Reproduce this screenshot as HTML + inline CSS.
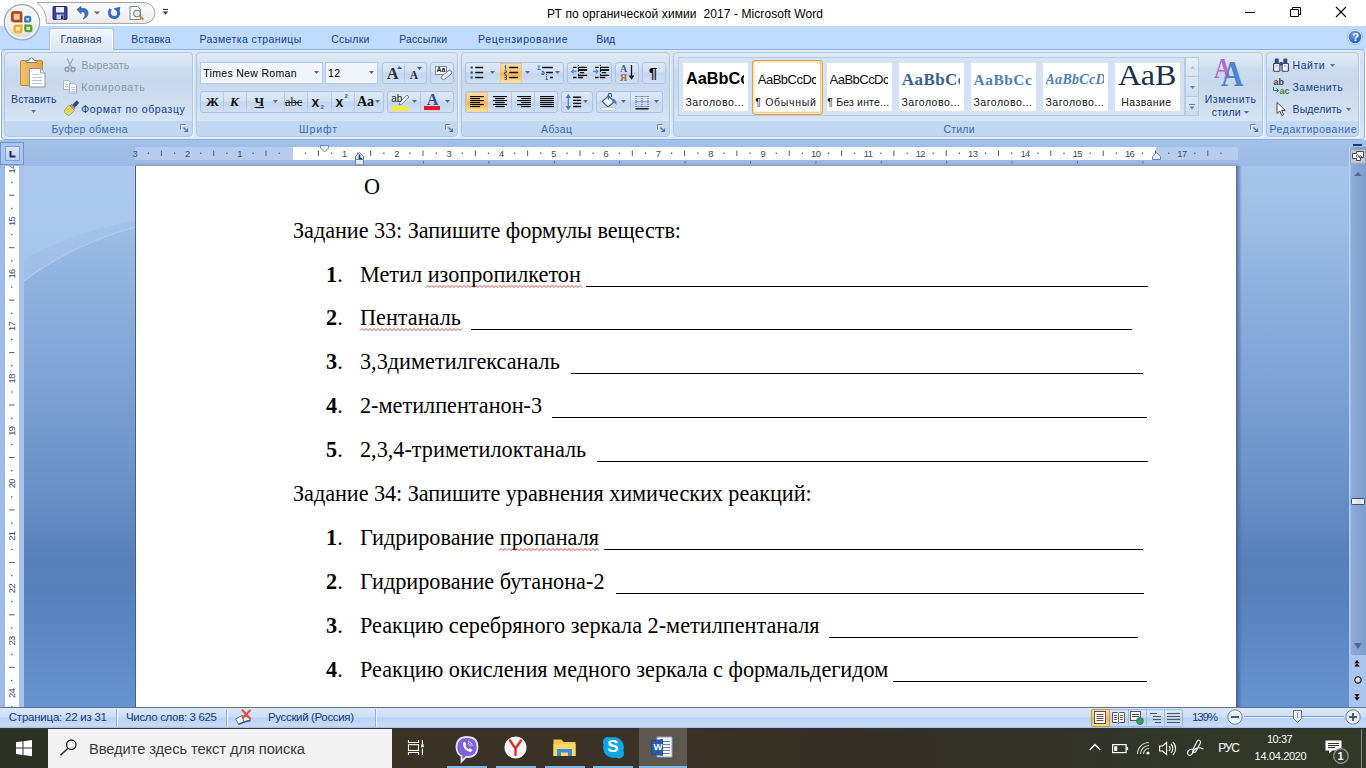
<!DOCTYPE html>
<html lang="ru"><head><meta charset="utf-8"><title>РТ по органической химии 2017 - Microsoft Word</title>
<style>
*{box-sizing:border-box;margin:0;padding:0}
html,body{width:1366px;height:768px;overflow:hidden;background:#fff}
body{font-family:"Liberation Sans","DejaVu Sans",sans-serif;font-size:11px;color:#15428b;position:relative}
.a,.tx,svg.i{position:absolute}
.tx{white-space:nowrap;z-index:3}
svg.i{overflow:visible}
#tabs{left:0;top:26px;width:1366px;height:24px;background:#bfdbff}
#atab{left:49px;top:27.5px;width:65px;height:22.5px;z-index:2;border:1px solid #a9c5ea;border-bottom:none;border-radius:4px 4px 0 0;background:linear-gradient(#f2f7fd 0,#e4edf9 50%,#dde8f6 100%);box-shadow:inset 1px 1px 0 rgba(255,255,255,.8),inset -1px 0 0 rgba(255,255,255,.8)}
#ribbon{left:1px;top:49px;width:1364px;height:91px;border:1px solid #93b4e0;border-bottom-color:#8eafd9;border-radius:4px;background:linear-gradient(#dde8f7 0,#d2e1f4 14px,#cfe0f5 60px,#d6e8f9 100%)}
.grp{top:52px;height:85px;border:1px solid #afc6e5;border-radius:4px;box-shadow:1px 1px 0 rgba(255,255,255,.55);background:linear-gradient(#dfe9f6 0,#d6e3f3 11px,#cbdbef 16px,#c7d8ed 30px,#cfdff2 55px,#d6e5f6 68px,#c2d8f1 68.5px,#c0d7f0 100%)}
.bg{border:1px solid #abc3e3;border-radius:3px;background:linear-gradient(#dbe7f6 0,#d3e1f4 45%,#c3d6ee 50%,#cfdff4 100%);height:22px}
.on{background:linear-gradient(#fbdcae 0,#fac880 40%,#f8b352 55%,#fbd078 85%,#fde5a8 100%);border:1px solid #eec083;border-top-color:#e3c29a;border-bottom-color:#f3d9a0}
.sep{width:1px;background:#a9c0df;top:0;bottom:0}
.box{background:#f1f6fd;border:1px solid #b4c9e6;height:22px}
#docarea{left:0;top:140px;width:1366px;height:567px;background:linear-gradient(#a3c0e8 0,#a6c3eb 30px,#9dbce6 90px,#8baedd 160px,#7a9fd2 260px,#6790c6 350px,#5781ba 420px,#5682bc 450px,#5d8ac6 510px,#6593d0 567px)}
#page{left:136px;top:166px;width:1100px;height:541px;background:#fff}
#status{left:0;top:707px;width:1366px;height:21px;background:linear-gradient(#dbe8f9 0,#cbdef8 9px,#b7d2f5 10px,#c9dcf6 18px,#9fbce4 100%);border-top:1px solid #61728f}
#taskbar{left:0;top:728px;width:1366px;height:40px;background:linear-gradient(#2e3238 0,#2e3238 1px,rgba(0,0,0,0) 2px),linear-gradient(90deg,#2b3223 0,#2b3223 48px,#3b3226 392px,#3a3226 700px,#352f25 840px,#33332a 1050px,#323828 1250px,#323828 100%)}
.doc{font-family:"Liberation Serif","DejaVu Serif",serif;color:#000;font-size:22.24px;white-space:nowrap;position:absolute;line-height:26px}
.ul{position:absolute;height:1px;background:#000}
.sty{top:63px;width:65px;height:48px;background:#fff;overflow:hidden}
</style></head><body>

<span class="tx" style="left:547.00px;top:7.20px;font:normal normal 12px/14px 'Liberation Sans','DejaVu Sans',sans-serif;color:#000;letter-spacing:0.088px;white-space:pre;">РТ по органической химии  2017 - Microsoft Word</span>
<svg class="i" style="left:1240px;top:0" width="126" height="26" viewBox="0 0 126 26">
<path d="M5,12.5h10" stroke="#000" stroke-width="1" fill="none"/>
<path d="M50.5,9.5h8v7h-8z M52.5,9.5v-2h8v7h-2" stroke="#000" stroke-width="1" fill="none"/>
<path d="M96,7l10,10M106,7l-10,10" stroke="#000" stroke-width="1.1" fill="none"/>
</svg>
<div id="tabs" class="a"></div><div id="atab" class="a"></div>
<svg class="i" style="left:0;top:0" width="180" height="50" viewBox="0 0 180 50">
<defs>
<radialGradient id="ob" cx="0.5" cy="0.35" r="0.75"><stop offset="0" stop-color="#ffffff"/><stop offset="0.55" stop-color="#eef0f3"/><stop offset="0.8" stop-color="#cfd4dc"/><stop offset="1" stop-color="#a9b0bd"/></radialGradient>
<linearGradient id="qp" x1="0" y1="0" x2="0" y2="1"><stop offset="0" stop-color="#fbfbfc"/><stop offset="1" stop-color="#ececee"/></linearGradient>
</defs>
<path d="M37,2.600 A24.600,24.600 0 0 1 46.400,23.400 H144.500 A10.400,10.400 0 0 0 144.500,2.600 Z" fill="url(#qp)" stroke="#9fa3aa" stroke-width="1"/>
<circle cx="22" cy="22.300" r="17.700" fill="url(#ob)" stroke="#9ea5b3" stroke-width="1.200"/>
<circle cx="22" cy="22.300" r="15.800" fill="none" stroke="#fff" stroke-opacity=".75" stroke-width="1.500"/>
<g>
<rect x="12.300" y="12.300" width="8.800" height="8.800" rx="1.800" fill="#f0c9a8" stroke="#b4491d" stroke-width="2.800"/>
<rect x="25.200" y="16.800" width="5" height="4.700" rx="1.200" fill="#cfe0f2" stroke="#3b78b8" stroke-width="2.200"/>
<rect x="14.700" y="25.700" width="6.600" height="6.400" rx="1.500" fill="#fbe6b0" stroke="#efae2c" stroke-width="2.600"/>
<rect x="25.300" y="25.600" width="6" height="5.500" rx="1.300" fill="#dcebc6" stroke="#5a9a32" stroke-width="2.300"/>
<circle cx="21.600" cy="21.600" r="1.100" fill="#9a4a2a"/><circle cx="25.300" cy="21.600" r="1" fill="#2f6aa8"/><circle cx="21.800" cy="25.200" r="1" fill="#e0a030"/><circle cx="25.300" cy="25.200" r="1" fill="#4f8f30"/>
</g>
<!-- save -->
<g><rect x="53" y="6.5" width="14" height="13" rx="1" fill="#3b3f9a" stroke="#23266b" stroke-width="1"/><rect x="56" y="7" width="8" height="5.5" fill="#e9ecf8"/><rect x="56.5" y="14.5" width="7" height="5" fill="#c9cde6"/><rect x="61" y="15.5" width="2" height="3.5" fill="#23266b"/></g>
<!-- undo -->
<path d="M77,9.5 l4,-3 v2 h2.5 a4.5,4.5 0 0 1 4.5,4.5 c0,3 -2,5 -5,6 c1.8,-1.8 2.3,-3.3 2,-5 c-0.3,-1.6 -1.4,-2.3 -2.5,-2.3 h-1.500 v2 z" fill="#3e72c2" stroke="#27509a" stroke-width=".7"/>
<path d="M94,11.5h6l-3,3z" fill="#5d6b85"/>
<!-- redo -->
<path d="M110.400,8.800 C108.300,12.800 109.600,17.400 114.200,17.500 C118.600,17.400 119.600,13.400 117.800,10.300" fill="none" stroke="#3a6cc0" stroke-width="2.900"/><path d="M113.300,8.600 L120.300,6.800 L119.200,13.300z" fill="#3a6cc0"/>
<!-- preview -->
<path d="M130,6.500h7.500l3,3v10h-10.500z" fill="#fff" stroke="#7f8794" stroke-width="1"/><circle cx="137" cy="13.500" r="3.300" fill="#e8f0fa" stroke="#767c86" stroke-width="1.100"/><path d="M139.500,16l4,3.500" stroke="#c98738" stroke-width="2"/>
<path d="M163,9.500h5" stroke="#2c3a58" stroke-width="1.200"/><path d="M162.800,11.500h5.400l-2.700,3.300z" fill="#2c3a58"/>
</svg>
<span class="tx" style="left:60.50px;top:32.17px;font:normal normal 10.5px/14px 'Liberation Sans','DejaVu Sans',sans-serif;color:#1e3a6b;letter-spacing:0.173px;">Главная</span>
<span class="tx" style="left:131.30px;top:32.17px;font:normal normal 10.5px/14px 'Liberation Sans','DejaVu Sans',sans-serif;color:#173f83;letter-spacing:0.029px;">Вставка</span>
<span class="tx" style="left:199.50px;top:32.17px;font:normal normal 10.5px/14px 'Liberation Sans','DejaVu Sans',sans-serif;color:#173f83;letter-spacing:0.409px;">Разметка страницы</span>
<span class="tx" style="left:331.30px;top:32.17px;font:normal normal 10.5px/14px 'Liberation Sans','DejaVu Sans',sans-serif;color:#173f83;letter-spacing:0.207px;">Ссылки</span>
<span class="tx" style="left:399.30px;top:32.17px;font:normal normal 10.5px/14px 'Liberation Sans','DejaVu Sans',sans-serif;color:#173f83;letter-spacing:0.096px;">Рассылки</span>
<span class="tx" style="left:478.00px;top:32.17px;font:normal normal 10.5px/14px 'Liberation Sans','DejaVu Sans',sans-serif;color:#173f83;letter-spacing:0.648px;">Рецензирование</span>
<span class="tx" style="left:596.30px;top:32.17px;font:normal normal 10.5px/14px 'Liberation Sans','DejaVu Sans',sans-serif;color:#173f83;letter-spacing:-0.098px;">Вид</span>
<svg class="i" style="left:1347px;top:29px" width="16" height="16" viewBox="0 0 16 16"><defs><radialGradient id="hg" cx=".4" cy=".3" r=".8"><stop offset="0" stop-color="#6fa2e8"/><stop offset="1" stop-color="#1c4fa6"/></radialGradient></defs><circle cx="8" cy="8" r="7" fill="url(#hg)" stroke="#e8f1fd" stroke-width="1.300"/><circle cx="8" cy="8" r="7.600" fill="none" stroke="#7a9fd6" stroke-width=".6"/></svg>
<span class="tx" style="left:1352.30px;top:30.05px;font:normal bold 11px/14px 'Liberation Sans','DejaVu Sans',sans-serif;color:#fff;letter-spacing:0.000px;">?</span>
<div id="ribbon" class="a"></div>
<div class="a grp" style="left:4px;width:189px"></div>
<span class="tx" style="left:51.50px;top:122.07px;font:normal normal 10.5px/14px 'Liberation Sans','DejaVu Sans',sans-serif;color:#3e6aaa;letter-spacing:0.423px;">Буфер обмена</span>
<svg class="i" style="left:180px;top:124px" width="9" height="9" viewBox="0 0 9 9"><path d="M0.500,5.500v-5h5" fill="none" stroke="#6b7f9e" stroke-width="1"/><path d="M1.500,6.500v-5h5" fill="none" stroke="#fff" stroke-width="1" opacity=".8"/><path d="M3.500,3.500l4,4M7.500,4.500v3h-3" fill="none" stroke="#5a6f90" stroke-width="1.100"/></svg>
<div class="a grp" style="left:196px;width:262px"></div>
<span class="tx" style="left:299.00px;top:122.07px;font:normal normal 10.5px/14px 'Liberation Sans','DejaVu Sans',sans-serif;color:#3e6aaa;letter-spacing:0.864px;">Шрифт</span>
<svg class="i" style="left:445px;top:124px" width="9" height="9" viewBox="0 0 9 9"><path d="M0.500,5.500v-5h5" fill="none" stroke="#6b7f9e" stroke-width="1"/><path d="M1.500,6.500v-5h5" fill="none" stroke="#fff" stroke-width="1" opacity=".8"/><path d="M3.500,3.500l4,4M7.500,4.500v3h-3" fill="none" stroke="#5a6f90" stroke-width="1.100"/></svg>
<div class="a grp" style="left:461px;width:209px"></div>
<span class="tx" style="left:541.00px;top:122.07px;font:normal normal 10.5px/14px 'Liberation Sans','DejaVu Sans',sans-serif;color:#3e6aaa;letter-spacing:0.386px;">Абзац</span>
<svg class="i" style="left:657px;top:124px" width="9" height="9" viewBox="0 0 9 9"><path d="M0.500,5.500v-5h5" fill="none" stroke="#6b7f9e" stroke-width="1"/><path d="M1.500,6.500v-5h5" fill="none" stroke="#fff" stroke-width="1" opacity=".8"/><path d="M3.500,3.500l4,4M7.500,4.500v3h-3" fill="none" stroke="#5a6f90" stroke-width="1.100"/></svg>
<div class="a grp" style="left:673px;width:590px"></div>
<span class="tx" style="left:943.50px;top:122.07px;font:normal normal 10.5px/14px 'Liberation Sans','DejaVu Sans',sans-serif;color:#3e6aaa;letter-spacing:0.188px;">Стили</span>
<svg class="i" style="left:1250px;top:124px" width="9" height="9" viewBox="0 0 9 9"><path d="M0.500,5.500v-5h5" fill="none" stroke="#6b7f9e" stroke-width="1"/><path d="M1.500,6.500v-5h5" fill="none" stroke="#fff" stroke-width="1" opacity=".8"/><path d="M3.500,3.500l4,4M7.500,4.500v3h-3" fill="none" stroke="#5a6f90" stroke-width="1.100"/></svg>
<div class="a grp" style="left:1266px;width:93px"></div>
<span class="tx" style="left:1269.50px;top:122.07px;font:normal normal 10.5px/14px 'Liberation Sans','DejaVu Sans',sans-serif;color:#3e6aaa;letter-spacing:0.540px;">Редактирование</span>
<svg class="i" style="left:19px;top:57px" width="30" height="32" viewBox="0 0 30 32">
<defs><linearGradient id="pg" x1="0" y1="0" x2="1" y2="0"><stop offset="0" stop-color="#f2c06a"/><stop offset="1" stop-color="#e2a445"/></linearGradient></defs>
<rect x="1.500" y="3.500" width="22" height="25" rx="1.500" fill="url(#pg)" stroke="#c08a3a" stroke-width="1"/>
<path d="M7,5.500 v-2 h3 a2.500,2.500 0 0 1 5,0 h3 v2z" fill="#f4f4f4" stroke="#7d7d7d" stroke-width=".9"/>
<path d="M10.500,11.500 h11 l4.500,4.500 v14 h-15.500z" fill="#fff" stroke="#8a93a3" stroke-width="1"/>
<path d="M21.500,11.500 v4.500 h4.500" fill="#e6ebf3" stroke="#8a93a3" stroke-width=".9"/>
<path d="M13,17.500h7M13,20.500h10M13,23.500h10M13,26.500h10" stroke="#b9c3d2" stroke-width="1"/>
</svg>
<span class="tx" style="left:11.00px;top:92.17px;font:normal normal 10.5px/14px 'Liberation Sans','DejaVu Sans',sans-serif;color:#173f83;letter-spacing:0.142px;">Вставить</span>
<svg class="i" style="left:31.0px;top:110.0px" width="5" height="3" viewBox="0 0 5 3"><path d="M0,0h5l-2.500,3z" fill="#5b6f94"/></svg>
<svg class="i" style="left:64px;top:58px" width="12" height="15" viewBox="0 0 12 15"><path d="M3,0.500 L7.500,9.500 M9,0.500 L4.500,9.500" stroke="#9aa7bd" stroke-width="1.300" fill="none"/><circle cx="3" cy="11.500" r="2" fill="none" stroke="#8796b2" stroke-width="1.300"/><circle cx="9" cy="11.500" r="2" fill="none" stroke="#8796b2" stroke-width="1.300"/></svg>
<span class="tx" style="left:81.60px;top:58.17px;font:normal normal 10.5px/14px 'Liberation Sans','DejaVu Sans',sans-serif;color:#8c97ab;letter-spacing:0.143px;">Вырезать</span>
<svg class="i" style="left:62px;top:80px" width="16" height="14" viewBox="0 0 16 14"><path d="M1.500,0.500h5l2,2v7h-7z" fill="#f1f4f8" stroke="#a9b4c6" stroke-width="1"/><path d="M7.500,3.500h5l2,2v7.500h-7z" fill="#f7f9fb" stroke="#a0acbf" stroke-width="1"/><path d="M9,7.500h4M9,9.500h4M9,11.500h4M3,4.500h3M3,6.500h3" stroke="#c3ccd9" stroke-width="1"/></svg>
<span class="tx" style="left:81.30px;top:80.28px;font:normal normal 10.5px/14px 'Liberation Sans','DejaVu Sans',sans-serif;color:#8c97ab;letter-spacing:0.774px;">Копировать</span>
<svg class="i" style="left:62px;top:101px" width="17" height="17" viewBox="0 0 17 17"><g transform="translate(8.800,7.800) rotate(45)"><rect x="-1.500" y="-10" width="3" height="6.500" rx="1" fill="#3d416f" stroke="#2a2d52" stroke-width=".6"/><rect x="-2.700" y="-3.800" width="5.400" height="2.400" fill="#9a9fb8" stroke="#5a5f80" stroke-width=".6"/><path d="M-3.700,-1.400h7.400v5.500c0,2 -1.500,3 -3.700,3s-3.700,-1 -3.700,-3z" fill="#e9d76a" stroke="#a8922e" stroke-width=".8"/><path d="M-1.800,-1v6M0.600,-1v6.500" stroke="#cdb84a" stroke-width=".7"/></g></svg>
<span class="tx" style="left:81.30px;top:102.08px;font:normal normal 10.5px/14px 'Liberation Sans','DejaVu Sans',sans-serif;color:#173f83;letter-spacing:0.584px;">Формат по образцу</span>
<div class="a box" style="left:200px;top:62px;width:123px"></div><div class="a box" style="left:325px;top:62px;width:53px"></div>
<span class="tx" style="left:203.20px;top:66.08px;font:normal normal 10.5px/14px 'Liberation Sans','DejaVu Sans',sans-serif;color:#000;letter-spacing:0.316px;">Times New Roman</span>
<svg class="i" style="left:313.5px;top:71.0px" width="5" height="3" viewBox="0 0 5 3"><path d="M0,0h5l-2.500,3z" fill="#5b6f94"/></svg>
<svg class="i" style="left:369.0px;top:71.0px" width="5" height="3" viewBox="0 0 5 3"><path d="M0,0h5l-2.500,3z" fill="#5b6f94"/></svg>
<span class="tx" style="left:328.00px;top:66.08px;font:normal normal 10.5px/14px 'Liberation Sans','DejaVu Sans',sans-serif;color:#000;letter-spacing:0.321px;">12</span>
<div class="a bg" style="left:382px;top:62px;width:45px"></div>
<div class="a" style="left:404px;top:63px;width:1px;height:20px;background:linear-gradient(#c3d3ea,#a8bedd 50%,#c3d3ea)"></div>
<div class="a bg" style="left:430px;top:62px;width:24px"></div>
<div class="a bg" style="left:200px;top:91px;width:184px"></div>
<div class="a" style="left:223px;top:92px;width:1px;height:20px;background:linear-gradient(#c3d3ea,#a8bedd 50%,#c3d3ea)"></div>
<div class="a" style="left:246px;top:92px;width:1px;height:20px;background:linear-gradient(#c3d3ea,#a8bedd 50%,#c3d3ea)"></div>
<div class="a" style="left:284px;top:92px;width:1px;height:20px;background:linear-gradient(#c3d3ea,#a8bedd 50%,#c3d3ea)"></div>
<div class="a" style="left:307px;top:92px;width:1px;height:20px;background:linear-gradient(#c3d3ea,#a8bedd 50%,#c3d3ea)"></div>
<div class="a" style="left:331px;top:92px;width:1px;height:20px;background:linear-gradient(#c3d3ea,#a8bedd 50%,#c3d3ea)"></div>
<div class="a" style="left:354px;top:92px;width:1px;height:20px;background:linear-gradient(#c3d3ea,#a8bedd 50%,#c3d3ea)"></div>
<div class="a bg" style="left:387px;top:91px;width:67px"></div>
<div class="a" style="left:420px;top:92px;width:1px;height:20px;background:linear-gradient(#c3d3ea,#a8bedd 50%,#c3d3ea)"></div>
<span class="tx" style="left:386.70px;top:64.98px;font:normal bold 16.5px/18px 'Liberation Serif','DejaVu Serif',serif;color:#2b2b33;letter-spacing:0.000px;">A</span>
<svg class="i" style="left:396.500px;top:66.200px" width="5" height="3" viewBox="0 0 5 3"><path d="M0,3h5l-2.500,-3z" fill="#3f5f98"/></svg>
<span class="tx" style="left:409.80px;top:68.42px;font:normal bold 11.5px/14px 'Liberation Serif','DejaVu Serif',serif;color:#2b2b33;letter-spacing:0.000px;">A</span>
<svg class="i" style="left:417px;top:66.800px" width="5" height="3" viewBox="0 0 5 3"><path d="M0,0h5l-2.500,3z" fill="#3f5f98"/></svg>
<svg class="i" style="left:434.500px;top:65.500px" width="18" height="17" viewBox="0 0 18 17"><rect x="0.500" y="0.500" width="11" height="8" fill="#fff" stroke="#7b8aa5" stroke-width="1"/><path d="M7,10 l6,-5 a2,2 0 0 1 3,3 l-6,5 a2,2 0 0 1 -3,-3z" fill="#f2f4f8" stroke="#6d7b95" stroke-width="1"/></svg>
<span class="tx" style="left:436.50px;top:66.35px;font:normal bold 7px/8px 'Liberation Sans','DejaVu Sans',sans-serif;color:#222;letter-spacing:0.000px;">Aa</span>
<span class="tx" style="left:206.00px;top:93.55px;font:normal bold 13px/16px 'Liberation Serif','DejaVu Serif',serif;color:#111;letter-spacing:0.000px;">Ж</span>
<span class="tx" style="left:230.00px;top:93.55px;font:italic bold 13px/16px 'Liberation Serif','DejaVu Serif',serif;color:#111;letter-spacing:0.000px;">К</span>
<span class="tx" style="left:254.50px;top:93.55px;font:normal bold 13px/16px 'Liberation Serif','DejaVu Serif',serif;color:#111;letter-spacing:0.000px;text-decoration:underline;">Ч</span>
<svg class="i" style="left:272.8px;top:100.0px" width="5" height="3" viewBox="0 0 5 3"><path d="M0,0h5l-2.500,3z" fill="#5b6f94"/></svg>
<span class="tx" style="left:285.00px;top:94.58px;font:normal normal 12.5px/14px 'Liberation Serif','DejaVu Serif',serif;color:#222;letter-spacing:0.000px;text-decoration:line-through;">abc</span>
<span class="tx" style="left:311.50px;top:93.70px;font:normal bold 14px/16px 'Liberation Sans','DejaVu Sans',sans-serif;color:#111;letter-spacing:0.000px;">x</span>
<span class="tx" style="left:320.50px;top:103.60px;font:normal bold 6px/7px 'Liberation Sans','DejaVu Sans',sans-serif;color:#2f5fae;letter-spacing:0.000px;">2</span>
<span class="tx" style="left:335.50px;top:93.70px;font:normal bold 14px/16px 'Liberation Sans','DejaVu Sans',sans-serif;color:#111;letter-spacing:0.000px;">x</span>
<span class="tx" style="left:344.50px;top:93.10px;font:normal bold 6px/7px 'Liberation Sans','DejaVu Sans',sans-serif;color:#2f5fae;letter-spacing:0.000px;">2</span>
<span class="tx" style="left:357.00px;top:93.70px;font:normal bold 14px/16px 'Liberation Serif','DejaVu Serif',serif;color:#111;letter-spacing:0.000px;">Aa</span>
<svg class="i" style="left:374.8px;top:100.0px" width="5" height="3" viewBox="0 0 5 3"><path d="M0,0h5l-2.500,3z" fill="#5b6f94"/></svg>
<svg class="i" style="left:390px;top:93px" width="22" height="18" viewBox="0 0 22 18"><rect x="1.500" y="13.500" width="17" height="4" fill="#ffee22"/><path d="M10,9 l7,-7 l2,2 l-7,7 l-3,1z" fill="#f5f7fb" stroke="#6a7896" stroke-width=".9"/></svg>
<span class="tx" style="left:391.30px;top:93.70px;font:normal normal 10px/10px 'Liberation Sans','DejaVu Sans',sans-serif;color:#2a2a10;letter-spacing:0.000px;letter-spacing:-0.2px;">ab</span>
<svg class="i" style="left:412.3px;top:100.0px" width="5" height="3" viewBox="0 0 5 3"><path d="M0,0h5l-2.500,3z" fill="#5b6f94"/></svg>
<span class="tx" style="left:426.80px;top:91.60px;font:normal bold 16px/16px 'Liberation Serif','DejaVu Serif',serif;color:#2c4f9e;letter-spacing:0.000px;">A</span>
<div class="a" style="left:424px;top:106px;width:16px;height:3.800px;background:#e8131d"></div>
<svg class="i" style="left:445.3px;top:100.0px" width="5" height="3" viewBox="0 0 5 3"><path d="M0,0h5l-2.500,3z" fill="#5b6f94"/></svg>
<div class="a bg" style="left:465px;top:62px;width:99px"></div>
<div class="a on" style="left:499.5px;top:63px;height:20px;width:22.5px;border-radius:1px"></div>
<div class="a bg" style="left:567px;top:62px;width:45px"></div>
<div class="a bg" style="left:615px;top:62px;width:24px"></div>
<div class="a bg" style="left:642px;top:62px;width:24px"></div>
<div class="a bg" style="left:465px;top:91px;width:93px"></div>
<div class="a on" style="left:465.5px;top:92px;height:20px;width:22.5px;border-radius:3px 0 0 3px"></div>
<div class="a" style="left:511px;top:92px;width:1px;height:20px;background:linear-gradient(#c3d3ea,#a8bedd 50%,#c3d3ea)"></div>
<div class="a" style="left:534px;top:92px;width:1px;height:20px;background:linear-gradient(#c3d3ea,#a8bedd 50%,#c3d3ea)"></div>
<div class="a bg" style="left:561px;top:91px;width:32px"></div>
<div class="a bg" style="left:596px;top:91px;width:67px"></div>
<div class="a" style="left:630px;top:92px;width:1px;height:20px;background:linear-gradient(#c3d3ea,#a8bedd 50%,#c3d3ea)"></div>
<svg class="i" style="left:470px;top:65px" width="16" height="15" viewBox="0 0 16 15"><circle cx="1.700" cy="2.500" r="1.300" fill="#3a5a9c"/><circle cx="1.700" cy="7.500" r="1.300" fill="#3a5a9c"/><circle cx="1.700" cy="12.500" r="1.300" fill="#3a5a9c"/><path d="M5.200,2.500h8M5.200,7.500h8M5.200,12.500h8" stroke="#111" stroke-width="1.300"/></svg>
<svg class="i" style="left:489.8px;top:71.0px" width="5" height="3" viewBox="0 0 5 3"><path d="M0,0h5l-2.500,3z" fill="#5b6f94"/></svg>
<svg class="i" style="left:503px;top:65px" width="16" height="15" viewBox="0 0 16 15"><path d="M6.200,2.500h9M6.200,7.500h9M6.200,12.500h9" stroke="#111" stroke-width="1.300"/><path d="M1.500,1.500l1,-1v4M1.500,5.800h2v1.700h-2v1.700h2M1.500,10.500h2v4h-2M1.500,12.500h2" stroke="#4a4a6e" stroke-width=".9" fill="none"/></svg>
<svg class="i" style="left:525.0px;top:71.0px" width="5" height="3" viewBox="0 0 5 3"><path d="M0,0h5l-2.500,3z" fill="#5b6f94"/></svg>
<svg class="i" style="left:537px;top:65px" width="17" height="15" viewBox="0 0 17 15"><path d="M5,2.500h11M9,7.500h7M13,12.500h3" stroke="#111" stroke-width="1.300"/><path d="M1,1.500l1,-1v4M0.500,4.500h3" stroke="#3a5a9c" stroke-width=".9" fill="none"/><path d="M4.800,6.500h2.200v3h-2.200v-1.500h2.200" stroke="#3a5a9c" stroke-width=".9" fill="none"/><path d="M9.500,11v3.500M8.500,14.500h2.500" stroke="#3a5a9c" stroke-width=".9" fill="none"/><rect x="9" y="9" width="1" height="1" fill="#3a5a9c"/></svg>
<svg class="i" style="left:555.3px;top:71.0px" width="5" height="3" viewBox="0 0 5 3"><path d="M0,0h5l-2.500,3z" fill="#5b6f94"/></svg>
<svg class="i" style="left:570px;top:64px" width="18" height="17" viewBox="0 0 18 17"><path d="M3.100,3.400h3.500M8,3.400h9.200M9.700,8.700h4.400M8,11.300h9.200M3.100,13.500h3.500M8,13.500h5.200" stroke="#0a0a0a" stroke-width="1.300"/><path d="M8,6h9.200" stroke="#0a0a0a" stroke-width="1.900"/><path d="M8.400,0.800v15" stroke="#111" stroke-width="1" stroke-dasharray="1.200,1.800"/><path d="M6.600,7.400h-4.500" stroke="#5a86c8" stroke-width="1.500" fill="none"/><path d="M0.700,7.400l3,-2.800v5.600z" fill="#5a86c8"/></svg>
<svg class="i" style="left:592px;top:64px" width="18" height="17" viewBox="0 0 18 17"><path d="M3.100,3.400h3.500M8,3.400h9.200M9.700,8.700h4.400M8,11.300h9.200M3.100,13.500h3.500M8,13.500h5.200" stroke="#0a0a0a" stroke-width="1.300"/><path d="M8,6h9.200" stroke="#0a0a0a" stroke-width="1.900"/><path d="M8.400,0.800v15" stroke="#111" stroke-width="1" stroke-dasharray="1.200,1.800"/><path d="M0.900,7.400h4.500" stroke="#5a86c8" stroke-width="1.500" fill="none"/><path d="M6.800,7.400l-3,-2.800v5.600z" fill="#5a86c8"/></svg>
<span class="tx" style="left:619.90px;top:64.30px;font:normal bold 10px/10px 'Liberation Serif','DejaVu Serif',serif;color:#3b5a9a;letter-spacing:0.000px;">А</span>
<span class="tx" style="left:620.10px;top:72.50px;font:normal bold 10px/10px 'Liberation Serif','DejaVu Serif',serif;color:#b0604f;letter-spacing:0.000px;">Я</span>
<svg class="i" style="left:628.1px;top:64.8px" width="7" height="15" viewBox="0 0 7 15"><path d="M3.500,0v12" stroke="#111" stroke-width="1.300"/><path d="M0.600,10.500l2.900,4.300l2.900,-4.300z" fill="#111"/></svg>
<span class="tx" style="left:648.80px;top:65.62px;font:normal bold 15.5px/14px 'Liberation Sans','DejaVu Sans',sans-serif;color:#111;letter-spacing:0.000px;">¶</span>
<svg class="i" style="left:470px;top:96px" width="14" height="12" viewBox="0 0 14 12"><rect x="0" y="0" width="14" height="1.150" fill="#0a0a0a"/><rect x="0" y="2" width="10" height="1.150" fill="#0a0a0a"/><rect x="0" y="4" width="14" height="1.150" fill="#0a0a0a"/><rect x="0" y="6" width="10" height="1.150" fill="#0a0a0a"/><rect x="0" y="8" width="14" height="1.150" fill="#0a0a0a"/><rect x="0" y="10" width="10" height="1.150" fill="#0a0a0a"/></svg>
<svg class="i" style="left:493px;top:96px" width="14" height="12" viewBox="0 0 14 12"><rect x="0" y="0" width="14" height="1.150" fill="#0a0a0a"/><rect x="2" y="2" width="10" height="1.150" fill="#0a0a0a"/><rect x="0" y="4" width="14" height="1.150" fill="#0a0a0a"/><rect x="2" y="6" width="10" height="1.150" fill="#0a0a0a"/><rect x="0" y="8" width="14" height="1.150" fill="#0a0a0a"/><rect x="2" y="10" width="10" height="1.150" fill="#0a0a0a"/></svg>
<svg class="i" style="left:517px;top:96px" width="14" height="12" viewBox="0 0 14 12"><rect x="0" y="0" width="14" height="1.150" fill="#0a0a0a"/><rect x="4" y="2" width="10" height="1.150" fill="#0a0a0a"/><rect x="0" y="4" width="14" height="1.150" fill="#0a0a0a"/><rect x="4" y="6" width="10" height="1.150" fill="#0a0a0a"/><rect x="0" y="8" width="14" height="1.150" fill="#0a0a0a"/><rect x="4" y="10" width="10" height="1.150" fill="#0a0a0a"/></svg>
<svg class="i" style="left:540px;top:96px" width="14" height="12" viewBox="0 0 14 12"><rect x="0" y="0" width="14" height="1.150" fill="#0a0a0a"/><rect x="0" y="2" width="14" height="1.150" fill="#0a0a0a"/><rect x="0" y="4" width="14" height="1.150" fill="#0a0a0a"/><rect x="0" y="6" width="14" height="1.150" fill="#0a0a0a"/><rect x="0" y="8" width="14" height="1.150" fill="#0a0a0a"/><rect x="0" y="10" width="14" height="1.150" fill="#0a0a0a"/></svg>
<svg class="i" style="left:565px;top:93px" width="17" height="18" viewBox="0 0 17 18"><path d="M3.300,3v12" stroke="#4a76bc" stroke-width="1.200"/><path d="M0.600,5l2.700,-4.200l2.700,4.200zM0.600,13l2.700,4.200l2.700,-4.200z" fill="#4a76bc"/><path d="M8,4.300h8.200M8,7.400h8.200M8,10.400h8.200M8,13.500h8.200" stroke="#0a0a0a" stroke-width="1.400"/></svg>
<svg class="i" style="left:583.0px;top:100.0px" width="5" height="3" viewBox="0 0 5 3"><path d="M0,0h5l-2.500,3z" fill="#5b6f94"/></svg>
<svg class="i" style="left:600px;top:93px" width="18" height="18" viewBox="0 0 18 18"><path d="M2.300,8.500l6.200,-5.700l5.700,6.200l-6.200,5z" fill="#f6f8fb" stroke="#465a82" stroke-width="1.100"/><path d="M8.300,6.500v-4.500a1.600,1.600 0 0 1 3.200,0v2" fill="none" stroke="#465a82" stroke-width="1.100"/><path d="M12.500,5.500c3,0.500 4.500,3 4,6.500c-1.300,-1.700 -2.800,-2.700 -4.300,-2.700z" fill="#4a78c8"/><rect x="1" y="14.400" width="14.500" height="2.600" fill="#fff" stroke="#a9b6cc" stroke-width=".7"/></svg>
<svg class="i" style="left:620.5px;top:100.0px" width="5" height="3" viewBox="0 0 5 3"><path d="M0,0h5l-2.500,3z" fill="#5b6f94"/></svg>
<svg class="i" style="left:634.5px;top:94px" width="15" height="16" viewBox="0 0 15 16"><g fill="#56627e"><rect x="0.5" y="2" width="1" height="1"/><rect x="0.5" y="7" width="1" height="1"/><rect x="0.5" y="12" width="1" height="1"/><rect x="2.5" y="2" width="1" height="1"/><rect x="2.5" y="7" width="1" height="1"/><rect x="2.5" y="12" width="1" height="1"/><rect x="4.5" y="2" width="1" height="1"/><rect x="4.5" y="7" width="1" height="1"/><rect x="4.5" y="12" width="1" height="1"/><rect x="6.5" y="2" width="1" height="1"/><rect x="6.5" y="7" width="1" height="1"/><rect x="6.5" y="12" width="1" height="1"/><rect x="8.5" y="2" width="1" height="1"/><rect x="8.5" y="7" width="1" height="1"/><rect x="8.5" y="12" width="1" height="1"/><rect x="10.5" y="2" width="1" height="1"/><rect x="10.5" y="7" width="1" height="1"/><rect x="10.5" y="12" width="1" height="1"/><rect x="12.5" y="2" width="1" height="1"/><rect x="12.5" y="7" width="1" height="1"/><rect x="12.5" y="12" width="1" height="1"/><rect x="0.5" y="2" width="1" height="1"/><rect x="6.5" y="2" width="1" height="1"/><rect x="12.5" y="2" width="1" height="1"/><rect x="0.5" y="4" width="1" height="1"/><rect x="6.5" y="4" width="1" height="1"/><rect x="12.5" y="4" width="1" height="1"/><rect x="0.5" y="6" width="1" height="1"/><rect x="6.5" y="6" width="1" height="1"/><rect x="12.5" y="6" width="1" height="1"/><rect x="0.5" y="8" width="1" height="1"/><rect x="6.5" y="8" width="1" height="1"/><rect x="12.5" y="8" width="1" height="1"/><rect x="0.5" y="10" width="1" height="1"/><rect x="6.5" y="10" width="1" height="1"/><rect x="12.5" y="10" width="1" height="1"/><rect x="0.5" y="12" width="1" height="1"/><rect x="6.5" y="12" width="1" height="1"/><rect x="12.5" y="12" width="1" height="1"/></g><path d="M0.500,14.800h13" stroke="#111" stroke-width="1.400"/></svg>
<svg class="i" style="left:654.3px;top:100.0px" width="5" height="3" viewBox="0 0 5 3"><path d="M0,0h5l-2.500,3z" fill="#5b6f94"/></svg>
<div class="a" style="left:678px;top:57px;width:507px;height:59px;border:1px solid #b5cbe8;background:#d6e3f5"></div>
<div class="a" style="left:751.500px;top:59.500px;width:71px;height:55.500px;border-radius:3px;background:linear-gradient(#f0c98a,#f3c878 50%,#f5d28c);border:1px solid #cfa658;box-shadow:inset 0 0 0 1px #f8e0b0"></div><div class="a" style="left:754px;top:62px;width:66px;height:50px;background:#fdf0d2;border-radius:1px"></div>
<div class="a sty" style="left:682.5px"></div>
<span class="tx" style="left:686.00px;top:68.39px;font:normal bold 16.3px/20px 'Liberation Sans','DejaVu Sans',sans-serif;color:#000;letter-spacing:0.000px;max-width:58.0px;overflow:hidden;">AaBbCc</span>
<span class="tx" style="left:685.50px;top:95.28px;font:normal normal 10.5px/14px 'Liberation Sans','DejaVu Sans',sans-serif;color:#161616;letter-spacing:0.497px;">Заголово...</span>
<div class="a sty" style="left:754.5px"></div>
<span class="tx" style="left:757.80px;top:69.95px;font:normal normal 13px/20px 'Liberation Sans','DejaVu Sans',sans-serif;color:#111;letter-spacing:-0.511px;max-width:58.2px;overflow:hidden;">AaBbCcDc</span>
<span class="tx" style="left:755.30px;top:95.28px;font:normal normal 10.5px/14px 'Liberation Sans','DejaVu Sans',sans-serif;color:#161616;letter-spacing:0.692px;">¶ Обычный</span>
<div class="a sty" style="left:826.5px"></div>
<span class="tx" style="left:829.50px;top:69.95px;font:normal normal 13px/20px 'Liberation Sans','DejaVu Sans',sans-serif;color:#111;letter-spacing:-0.511px;max-width:58.5px;overflow:hidden;">AaBbCcDc</span>
<span class="tx" style="left:827.30px;top:95.28px;font:normal normal 10.5px/14px 'Liberation Sans','DejaVu Sans',sans-serif;color:#161616;letter-spacing:0.172px;">¶ Без инте...</span>
<div class="a sty" style="left:898.5px"></div>
<span class="tx" style="left:901.80px;top:69.55px;font:normal bold 17px/20px 'Liberation Serif','DejaVu Serif',serif;color:#3a5f8f;letter-spacing:0.421px;max-width:58.2px;overflow:hidden;">AaBbCc</span>
<span class="tx" style="left:901.50px;top:95.28px;font:normal normal 10.5px/14px 'Liberation Sans','DejaVu Sans',sans-serif;color:#161616;letter-spacing:0.497px;">Заголово...</span>
<div class="a sty" style="left:970.5px"></div>
<span class="tx" style="left:973.50px;top:69.63px;font:normal bold 15.4px/20px 'Liberation Serif','DejaVu Serif',serif;color:#4f7fb8;letter-spacing:0.544px;max-width:58.5px;overflow:hidden;">AaBbCc</span>
<span class="tx" style="left:973.50px;top:95.28px;font:normal normal 10.5px/14px 'Liberation Sans','DejaVu Sans',sans-serif;color:#161616;letter-spacing:0.497px;">Заголово...</span>
<div class="a sty" style="left:1042.5px"></div>
<span class="tx" style="left:1045.50px;top:69.70px;font:italic bold 14px/20px 'Liberation Serif','DejaVu Serif',serif;color:#4f7fb8;letter-spacing:0.277px;max-width:58.5px;overflow:hidden;">AaBbCcD</span>
<span class="tx" style="left:1045.50px;top:95.28px;font:normal normal 10.5px/14px 'Liberation Sans','DejaVu Sans',sans-serif;color:#161616;letter-spacing:0.497px;">Заголово...</span>
<div class="a sty" style="left:1114.5px"></div>
<span class="tx" style="left:1118.00px;top:60.20px;font:normal normal 30px/30px 'Liberation Serif','DejaVu Serif',serif;color:#1b2f4f;letter-spacing:0.000px;max-width:54.2px;overflow:hidden;transform:scaleX(1.07);transform-origin:0 50%;">АаВ</span>
<span class="tx" style="left:1121.30px;top:95.28px;font:normal normal 10.5px/14px 'Liberation Sans','DejaVu Sans',sans-serif;color:#161616;letter-spacing:0.411px;">Название</span>
<div class="a" style="left:1185px;top:57px;width:14px;height:20px;border:1px solid #b5cbe8;background:linear-gradient(#e6eef9,#d9e5f5)"></div>
<div class="a" style="left:1185px;top:77px;width:14px;height:20px;border:1px solid #b5cbe8;border-top:none;background:linear-gradient(#dbe7f6,#cbdbf0)"></div>
<div class="a" style="left:1185px;top:97px;width:14px;height:19px;border:1px solid #b5cbe8;border-top:none;background:linear-gradient(#dbe7f6,#cbdbf0)"></div>
<svg class="i" style="left:1189.5px;top:65.5px" width="5" height="3" viewBox="0 0 5 3"><path d="M0,3h5l-2.500,-3z" fill="#b7c0cf"/></svg>
<svg class="i" style="left:1189.5px;top:86.0px" width="5" height="3" viewBox="0 0 5 3"><path d="M0,0h5l-2.500,3z" fill="#6b7d9e"/></svg>
<svg class="i" style="left:1189px;top:104px" width="6" height="6" viewBox="0 0 6 6"><path d="M0,0.500h6" stroke="#6b7d9e" stroke-width="1"/><path d="M0.500,2.500h5l-2.500,3z" fill="#6b7d9e"/></svg>
<svg class="i" style="left:1213px;top:57px" width="34" height="32" viewBox="0 0 34 32"><defs><linearGradient id="ap" x1="0" y1="0" x2="0" y2="1"><stop offset="0" stop-color="#d778c8"/><stop offset="1" stop-color="#9a5fc0"/></linearGradient><linearGradient id="ab" x1="0" y1="0" x2="0" y2="1"><stop offset="0" stop-color="#86b2e8"/><stop offset="1" stop-color="#3f74c4"/></linearGradient></defs></svg>
<span class="tx" style="left:1214.00px;top:54.35px;font:normal bold 29px/28px 'Liberation Serif','DejaVu Serif',serif;color:#b868c4;letter-spacing:0.000px;transform:scaleX(.82);transform-origin:0 50%;">A</span>
<span class="tx" style="left:1221.00px;top:55.80px;font:normal bold 36px/36px 'Liberation Serif','DejaVu Serif',serif;color:#4f83cf;letter-spacing:0.000px;transform:scaleX(.86);transform-origin:0 50%;">A</span>
<span class="tx" style="left:1204.70px;top:92.28px;font:normal normal 10.5px/14px 'Liberation Sans','DejaVu Sans',sans-serif;color:#173f83;letter-spacing:0.562px;">Изменить</span>
<span class="tx" style="left:1211.70px;top:105.08px;font:normal normal 10.5px/14px 'Liberation Sans','DejaVu Sans',sans-serif;color:#173f83;letter-spacing:0.271px;">стили</span>
<svg class="i" style="left:1244.3px;top:110.5px" width="5" height="3" viewBox="0 0 5 3"><path d="M0,0h5l-2.500,3z" fill="#5b6f94"/></svg>
<svg class="i" style="left:1273px;top:58px" width="16" height="14" viewBox="0 0 16 14"><rect x="0.600" y="5.500" width="6.300" height="7.800" rx="0.800" fill="#eef2f9" stroke="#2f416e" stroke-width="1.100"/><rect x="9.100" y="5.500" width="6.300" height="7.800" rx="0.800" fill="#eef2f9" stroke="#2f416e" stroke-width="1.100"/><rect x="1.700" y="0.600" width="4" height="5" rx="1" fill="#364a7a"/><rect x="10.300" y="0.600" width="4" height="5" rx="1" fill="#364a7a"/><rect x="6.500" y="4" width="3" height="3.500" fill="#364a7a"/><path d="M2.500,8h2.500M11,8h2.500" stroke="#9aa8c4" stroke-width="1"/></svg>
<span class="tx" style="left:1292.60px;top:57.67px;font:normal normal 10.5px/14px 'Liberation Sans','DejaVu Sans',sans-serif;color:#173f83;letter-spacing:0.510px;">Найти</span>
<svg class="i" style="left:1329.8px;top:63.5px" width="5" height="3" viewBox="0 0 5 3"><path d="M0,0h5l-2.500,3z" fill="#5b6f94"/></svg>
<span class="tx" style="left:1273.50px;top:78.25px;font:normal bold 9px/9px 'Liberation Sans','DejaVu Sans',sans-serif;color:#444;letter-spacing:0.000px;">ab</span>
<span class="tx" style="left:1279.50px;top:86.75px;font:normal bold 9px/9px 'Liberation Sans','DejaVu Sans',sans-serif;color:#3d8a2e;letter-spacing:0.000px;">ac</span>
<svg class="i" style="left:1273px;top:87px" width="7" height="6" viewBox="0 0 7 6"><path d="M0.500,0v3.500h5M3.500,1.500l2,2l-2,2" stroke="#2b5fb8" stroke-width="1" fill="none"/></svg>
<span class="tx" style="left:1292.60px;top:80.17px;font:normal normal 10.5px/14px 'Liberation Sans','DejaVu Sans',sans-serif;color:#173f83;letter-spacing:0.431px;">Заменить</span>
<svg class="i" style="left:1276px;top:102px" width="10" height="15" viewBox="0 0 10 15"><path d="M1,0.500v11l2.800,-2.500l2,4.500l1.800,-0.800l-2,-4.300h3.700z" fill="#fff" stroke="#333" stroke-width=".9"/></svg>
<span class="tx" style="left:1292.60px;top:102.08px;font:normal normal 10.5px/14px 'Liberation Sans','DejaVu Sans',sans-serif;color:#173f83;letter-spacing:0.109px;">Выделить</span>
<svg class="i" style="left:1346.3px;top:107.5px" width="5" height="3" viewBox="0 0 5 3"><path d="M0,0h5l-2.500,3z" fill="#5b6f94"/></svg>
<div id="docarea" class="a"></div>
<svg class="i" style="left:24px;top:166px" width="112" height="200" viewBox="0 0 112 200">
<path d="M0,0H112V55C70,62 30,78 0,93z" fill="#b3cdf0" fill-opacity=".55"/>
<path d="M0,93C30,78 70,62 112,55V61C70,72 30,92 0,115z" fill="#a9c5ec" fill-opacity=".55"/>
<path d="M0,115C30,92 70,72 112,61" fill="none" stroke="#b9d1f1" stroke-opacity=".7" stroke-width="1.200"/>
</svg>
<div class="a" style="left:0;top:140px;width:1366px;height:7px;background:linear-gradient(#a5c2e8 0,#9fbde6 100%)"></div>
<div class="a" style="left:0;top:147px;width:1366px;height:19px;background:linear-gradient(#9fbde6 0,#9cbae5 100%)"></div>
<div class="a" style="left:0;top:142px;width:24px;height:23px;border:1px solid #6f93cf;background:#a9c5ee"></div><div class="a" style="left:5px;top:146px;width:15px;height:15px;border:1px solid #7d9fd6;background:linear-gradient(#d5e4f8,#bcd3f2)"></div>
<svg class="i" style="left:9px;top:151px" width="7" height="7" viewBox="0 0 7 7"><path d="M1.500,0v5.500h5" stroke="#1a2c55" stroke-width="2" fill="none"/></svg>
<div class="a" style="left:135px;top:147px;width:1103px;height:12.500px;background:#fff"></div>
<div class="a" style="left:135px;top:147px;width:158px;height:12.500px;background:#b7cdee"></div>
<div class="a" style="left:1156px;top:147px;width:82px;height:12.500px;background:#b7cdee"></div>
<svg class="i" style="left:135px;top:147px" width="1103" height="13" viewBox="0 0 1103 13"><text x="0.2" y="10" text-anchor="middle" font-size="9.400" letter-spacing="0" fill="#3b4d70" font-family="Liberation Sans,sans-serif">3</text><rect x="12.8" y="5.500" width="1.200" height="1.500" fill="#4b5f86"/><rect x="25.9" y="3.500" width="1" height="5.500" fill="#4b5f86"/><rect x="39.0" y="5.500" width="1.200" height="1.500" fill="#4b5f86"/><text x="52.6" y="10" text-anchor="middle" font-size="9.400" letter-spacing="0" fill="#3b4d70" font-family="Liberation Sans,sans-serif">2</text><rect x="65.1" y="5.500" width="1.200" height="1.500" fill="#4b5f86"/><rect x="78.2" y="3.500" width="1" height="5.500" fill="#4b5f86"/><rect x="91.3" y="5.500" width="1.200" height="1.500" fill="#4b5f86"/><text x="104.9" y="10" text-anchor="middle" font-size="9.400" letter-spacing="0" fill="#3b4d70" font-family="Liberation Sans,sans-serif">1</text><rect x="117.5" y="5.500" width="1.200" height="1.500" fill="#4b5f86"/><rect x="130.5" y="3.500" width="1" height="5.500" fill="#4b5f86"/><rect x="143.6" y="5.500" width="1.200" height="1.500" fill="#4b5f86"/><rect x="169.8" y="5.500" width="1.200" height="1.500" fill="#4b5f86"/><rect x="182.9" y="3.500" width="1" height="5.500" fill="#4b5f86"/><rect x="195.9" y="5.500" width="1.200" height="1.500" fill="#4b5f86"/><text x="209.5" y="10" text-anchor="middle" font-size="9.400" letter-spacing="0" fill="#3b4d70" font-family="Liberation Sans,sans-serif">1</text><rect x="222.1" y="5.500" width="1.200" height="1.500" fill="#4b5f86"/><rect x="235.2" y="3.500" width="1" height="5.500" fill="#4b5f86"/><rect x="248.3" y="5.500" width="1.200" height="1.500" fill="#4b5f86"/><text x="261.8" y="10" text-anchor="middle" font-size="9.400" letter-spacing="0" fill="#3b4d70" font-family="Liberation Sans,sans-serif">2</text><rect x="274.4" y="5.500" width="1.200" height="1.500" fill="#4b5f86"/><rect x="287.5" y="3.500" width="1" height="5.500" fill="#4b5f86"/><rect x="300.6" y="5.500" width="1.200" height="1.500" fill="#4b5f86"/><text x="314.2" y="10" text-anchor="middle" font-size="9.400" letter-spacing="0" fill="#3b4d70" font-family="Liberation Sans,sans-serif">3</text><rect x="326.7" y="5.500" width="1.200" height="1.500" fill="#4b5f86"/><rect x="339.8" y="3.500" width="1" height="5.500" fill="#4b5f86"/><rect x="352.9" y="5.500" width="1.200" height="1.500" fill="#4b5f86"/><text x="366.5" y="10" text-anchor="middle" font-size="9.400" letter-spacing="0" fill="#3b4d70" font-family="Liberation Sans,sans-serif">4</text><rect x="379.1" y="5.500" width="1.200" height="1.500" fill="#4b5f86"/><rect x="392.1" y="3.500" width="1" height="5.500" fill="#4b5f86"/><rect x="405.2" y="5.500" width="1.200" height="1.500" fill="#4b5f86"/><text x="418.8" y="10" text-anchor="middle" font-size="9.400" letter-spacing="0" fill="#3b4d70" font-family="Liberation Sans,sans-serif">5</text><rect x="431.4" y="5.500" width="1.200" height="1.500" fill="#4b5f86"/><rect x="444.5" y="3.500" width="1" height="5.500" fill="#4b5f86"/><rect x="457.5" y="5.500" width="1.200" height="1.500" fill="#4b5f86"/><text x="471.1" y="10" text-anchor="middle" font-size="9.400" letter-spacing="0" fill="#3b4d70" font-family="Liberation Sans,sans-serif">6</text><rect x="483.7" y="5.500" width="1.200" height="1.500" fill="#4b5f86"/><rect x="496.8" y="3.500" width="1" height="5.500" fill="#4b5f86"/><rect x="509.9" y="5.500" width="1.200" height="1.500" fill="#4b5f86"/><text x="523.4" y="10" text-anchor="middle" font-size="9.400" letter-spacing="0" fill="#3b4d70" font-family="Liberation Sans,sans-serif">7</text><rect x="536.0" y="5.500" width="1.200" height="1.500" fill="#4b5f86"/><rect x="549.1" y="3.500" width="1" height="5.500" fill="#4b5f86"/><rect x="562.2" y="5.500" width="1.200" height="1.500" fill="#4b5f86"/><text x="575.8" y="10" text-anchor="middle" font-size="9.400" letter-spacing="0" fill="#3b4d70" font-family="Liberation Sans,sans-serif">8</text><rect x="588.3" y="5.500" width="1.200" height="1.500" fill="#4b5f86"/><rect x="601.4" y="3.500" width="1" height="5.500" fill="#4b5f86"/><rect x="614.5" y="5.500" width="1.200" height="1.500" fill="#4b5f86"/><text x="628.1" y="10" text-anchor="middle" font-size="9.400" letter-spacing="0" fill="#3b4d70" font-family="Liberation Sans,sans-serif">9</text><rect x="640.7" y="5.500" width="1.200" height="1.500" fill="#4b5f86"/><rect x="653.7" y="3.500" width="1" height="5.500" fill="#4b5f86"/><rect x="666.8" y="5.500" width="1.200" height="1.500" fill="#4b5f86"/><text x="680.7" y="10" text-anchor="middle" font-size="9.400" letter-spacing="-0.6" fill="#3b4d70" font-family="Liberation Sans,sans-serif">10</text><rect x="693.0" y="5.500" width="1.200" height="1.500" fill="#4b5f86"/><rect x="706.1" y="3.500" width="1" height="5.500" fill="#4b5f86"/><rect x="719.1" y="5.500" width="1.200" height="1.500" fill="#4b5f86"/><text x="733.0" y="10" text-anchor="middle" font-size="9.400" letter-spacing="-0.6" fill="#3b4d70" font-family="Liberation Sans,sans-serif">11</text><rect x="745.3" y="5.500" width="1.200" height="1.500" fill="#4b5f86"/><rect x="758.4" y="3.500" width="1" height="5.500" fill="#4b5f86"/><rect x="771.5" y="5.500" width="1.200" height="1.500" fill="#4b5f86"/><text x="785.3" y="10" text-anchor="middle" font-size="9.400" letter-spacing="-0.6" fill="#3b4d70" font-family="Liberation Sans,sans-serif">12</text><rect x="797.6" y="5.500" width="1.200" height="1.500" fill="#4b5f86"/><rect x="810.7" y="3.500" width="1" height="5.500" fill="#4b5f86"/><rect x="823.8" y="5.500" width="1.200" height="1.500" fill="#4b5f86"/><text x="837.7" y="10" text-anchor="middle" font-size="9.400" letter-spacing="-0.6" fill="#3b4d70" font-family="Liberation Sans,sans-serif">13</text><rect x="849.9" y="5.500" width="1.200" height="1.500" fill="#4b5f86"/><rect x="863.0" y="3.500" width="1" height="5.500" fill="#4b5f86"/><rect x="876.1" y="5.500" width="1.200" height="1.500" fill="#4b5f86"/><text x="890.0" y="10" text-anchor="middle" font-size="9.400" letter-spacing="-0.6" fill="#3b4d70" font-family="Liberation Sans,sans-serif">14</text><rect x="902.3" y="5.500" width="1.200" height="1.500" fill="#4b5f86"/><rect x="915.3" y="3.500" width="1" height="5.500" fill="#4b5f86"/><rect x="928.4" y="5.500" width="1.200" height="1.500" fill="#4b5f86"/><text x="942.3" y="10" text-anchor="middle" font-size="9.400" letter-spacing="-0.6" fill="#3b4d70" font-family="Liberation Sans,sans-serif">15</text><rect x="954.6" y="5.500" width="1.200" height="1.500" fill="#4b5f86"/><rect x="967.7" y="3.500" width="1" height="5.500" fill="#4b5f86"/><rect x="980.7" y="5.500" width="1.200" height="1.500" fill="#4b5f86"/><text x="994.6" y="10" text-anchor="middle" font-size="9.400" letter-spacing="-0.6" fill="#3b4d70" font-family="Liberation Sans,sans-serif">16</text><rect x="1006.9" y="5.500" width="1.200" height="1.500" fill="#4b5f86"/><rect x="1020.0" y="3.500" width="1" height="5.500" fill="#4b5f86"/><rect x="1033.1" y="5.500" width="1.200" height="1.500" fill="#4b5f86"/><text x="1046.9" y="10" text-anchor="middle" font-size="9.400" letter-spacing="-0.6" fill="#3b4d70" font-family="Liberation Sans,sans-serif">17</text><rect x="1059.2" y="5.500" width="1.200" height="1.500" fill="#4b5f86"/><rect x="1072.3" y="3.500" width="1" height="5.500" fill="#4b5f86"/><rect x="1085.4" y="5.500" width="1.200" height="1.500" fill="#4b5f86"/></svg>
<svg class="i" style="left:0;top:160.500px" width="1366" height="3" viewBox="0 0 1366 3"><rect x="423.0" y="0" width="1" height="2.500" fill="#5a70a0"/><rect x="488.4" y="0" width="1" height="2.500" fill="#5a70a0"/><rect x="553.8" y="0" width="1" height="2.500" fill="#5a70a0"/><rect x="619.2" y="0" width="1" height="2.500" fill="#5a70a0"/><rect x="684.6" y="0" width="1" height="2.500" fill="#5a70a0"/><rect x="750.0" y="0" width="1" height="2.500" fill="#5a70a0"/><rect x="815.4" y="0" width="1" height="2.500" fill="#5a70a0"/><rect x="880.8" y="0" width="1" height="2.500" fill="#5a70a0"/><rect x="946.2" y="0" width="1" height="2.500" fill="#5a70a0"/><rect x="1011.6" y="0" width="1" height="2.500" fill="#5a70a0"/><rect x="1077.0" y="0" width="1" height="2.500" fill="#5a70a0"/><rect x="1142.4" y="0" width="1" height="2.500" fill="#5a70a0"/></svg>
<svg class="i" style="left:320px;top:145px" width="10" height="8" viewBox="0 0 10 8"><path d="M0.500,0.500h8v2.500l-4,4l-4,-4z" fill="#e8eef8" stroke="#7a8fb5" stroke-width="1"/></svg>
<svg class="i" style="left:355px;top:152px" width="10" height="14" viewBox="0 0 10 14"><path d="M0.500,7.500v-3l4,-4l4,4v3z" fill="#e8eef8" stroke="#6d82a8" stroke-width="1"/><rect x="0.500" y="7.500" width="8" height="5.500" fill="#e4ebf6" stroke="#6d82a8" stroke-width="1"/><path d="M4.500,2.500v4h2.500" stroke="#1d3a78" stroke-width="1.600" fill="none"/></svg>
<svg class="i" style="left:1152px;top:152px" width="10" height="8" viewBox="0 0 10 8"><path d="M0.500,7.500v-3l4,-4l4,4v3z" fill="#e8eef8" stroke="#6d82a8" stroke-width="1"/></svg>
<div class="a" style="left:0;top:166px;width:24px;height:541px;background:linear-gradient(90deg,#9dbbe6 0,#9dbbe6 5px,#a8c4ec 19px,#a6c2ea 100%)"></div>
<div class="a" style="left:5px;top:166px;width:14px;height:541px;background:#fff"></div>
<svg class="i" style="left:0;top:166px;overflow:hidden" width="24" height="541" viewBox="0 0 24 541"><text transform="translate(15.400,3.0) rotate(-90)" text-anchor="middle" font-size="9.400" letter-spacing="-0.600" fill="#3b4d70" font-family="Liberation Sans,sans-serif">14</text><rect x="11" y="15.6" width="1.500" height="1.200" fill="#4b5f86"/><rect x="9" y="28.7" width="5.500" height="1" fill="#4b5f86"/><rect x="11" y="41.8" width="1.500" height="1.200" fill="#4b5f86"/><text transform="translate(15.400,55.4) rotate(-90)" text-anchor="middle" font-size="9.400" letter-spacing="-0.600" fill="#3b4d70" font-family="Liberation Sans,sans-serif">15</text><rect x="11" y="68.1" width="1.500" height="1.200" fill="#4b5f86"/><rect x="9" y="81.2" width="5.500" height="1" fill="#4b5f86"/><rect x="11" y="94.3" width="1.500" height="1.200" fill="#4b5f86"/><text transform="translate(15.400,107.9) rotate(-90)" text-anchor="middle" font-size="9.400" letter-spacing="-0.600" fill="#3b4d70" font-family="Liberation Sans,sans-serif">16</text><rect x="11" y="120.5" width="1.500" height="1.200" fill="#4b5f86"/><rect x="9" y="133.6" width="5.500" height="1" fill="#4b5f86"/><rect x="11" y="146.7" width="1.500" height="1.200" fill="#4b5f86"/><text transform="translate(15.400,160.4) rotate(-90)" text-anchor="middle" font-size="9.400" letter-spacing="-0.600" fill="#3b4d70" font-family="Liberation Sans,sans-serif">17</text><rect x="11" y="173.0" width="1.500" height="1.200" fill="#4b5f86"/><rect x="9" y="186.1" width="5.500" height="1" fill="#4b5f86"/><rect x="11" y="199.2" width="1.500" height="1.200" fill="#4b5f86"/><text transform="translate(15.400,212.8) rotate(-90)" text-anchor="middle" font-size="9.400" letter-spacing="-0.600" fill="#3b4d70" font-family="Liberation Sans,sans-serif">18</text><rect x="11" y="225.4" width="1.500" height="1.200" fill="#4b5f86"/><rect x="9" y="238.5" width="5.500" height="1" fill="#4b5f86"/><rect x="11" y="251.6" width="1.500" height="1.200" fill="#4b5f86"/><text transform="translate(15.400,265.2) rotate(-90)" text-anchor="middle" font-size="9.400" letter-spacing="-0.600" fill="#3b4d70" font-family="Liberation Sans,sans-serif">19</text><rect x="11" y="277.9" width="1.500" height="1.200" fill="#4b5f86"/><rect x="9" y="291.0" width="5.500" height="1" fill="#4b5f86"/><rect x="11" y="304.1" width="1.500" height="1.200" fill="#4b5f86"/><text transform="translate(15.400,317.7) rotate(-90)" text-anchor="middle" font-size="9.400" letter-spacing="-0.600" fill="#3b4d70" font-family="Liberation Sans,sans-serif">20</text><rect x="11" y="330.3" width="1.500" height="1.200" fill="#4b5f86"/><rect x="9" y="343.4" width="5.500" height="1" fill="#4b5f86"/><rect x="11" y="356.5" width="1.500" height="1.200" fill="#4b5f86"/><text transform="translate(15.400,370.2) rotate(-90)" text-anchor="middle" font-size="9.400" letter-spacing="-0.600" fill="#3b4d70" font-family="Liberation Sans,sans-serif">21</text><rect x="11" y="382.8" width="1.500" height="1.200" fill="#4b5f86"/><rect x="9" y="395.9" width="5.500" height="1" fill="#4b5f86"/><rect x="11" y="409.0" width="1.500" height="1.200" fill="#4b5f86"/><text transform="translate(15.400,422.6) rotate(-90)" text-anchor="middle" font-size="9.400" letter-spacing="-0.600" fill="#3b4d70" font-family="Liberation Sans,sans-serif">22</text><rect x="11" y="435.2" width="1.500" height="1.200" fill="#4b5f86"/><rect x="9" y="448.3" width="5.500" height="1" fill="#4b5f86"/><rect x="11" y="461.4" width="1.500" height="1.200" fill="#4b5f86"/><text transform="translate(15.400,475.0) rotate(-90)" text-anchor="middle" font-size="9.400" letter-spacing="-0.600" fill="#3b4d70" font-family="Liberation Sans,sans-serif">23</text><rect x="11" y="487.7" width="1.500" height="1.200" fill="#4b5f86"/><rect x="9" y="500.8" width="5.500" height="1" fill="#4b5f86"/><rect x="11" y="513.9" width="1.500" height="1.200" fill="#4b5f86"/><text transform="translate(15.400,527.5) rotate(-90)" text-anchor="middle" font-size="9.400" letter-spacing="-0.600" fill="#3b4d70" font-family="Liberation Sans,sans-serif">24</text><rect x="11" y="540.1" width="1.500" height="1.200" fill="#4b5f86"/></svg>
<div class="a" style="left:135px;top:166px;width:1px;height:541px;background:#4a5d85"></div>
<div class="a" style="left:1236px;top:166px;width:6px;height:541px;background:linear-gradient(90deg,rgba(60,85,130,.75),rgba(70,100,150,.45) 50%,rgba(80,110,160,0))"></div>
<div class="a" style="left:135px;top:163px;width:1104px;height:3px;background:linear-gradient(rgba(130,140,165,0),rgba(125,135,160,.55))"></div>
<div id="page" class="a"></div>
<div class="doc" style="left:364px;top:173.500px">О</div>
<div class="doc" style="left:293px;top:218px;letter-spacing:-0.06px;">Задание 33: Запишите формулы веществ:</div>
<div class="doc" style="left:326px;top:262px"><b>1</b>.</div>
<div class="doc" style="left:360px;top:262px;">Метил <span class="sq">изопропилкетон</span> </div>
<div class="ul" style="left:586px;top:286px;width:561.5px"></div>
<div class="doc" style="left:326px;top:305px"><b>2</b>.</div>
<div class="doc" style="left:360px;top:305px;"><span class="sq">Пентаналь</span></div>
<div class="ul" style="left:471px;top:329px;width:660.5px"></div>
<div class="doc" style="left:326px;top:349px"><b>3</b>.</div>
<div class="doc" style="left:360px;top:349px;">3,3диметилгексаналь</div>
<div class="ul" style="left:571px;top:373px;width:572px"></div>
<div class="doc" style="left:326px;top:393px"><b>4</b>.</div>
<div class="doc" style="left:360px;top:393px;">2-метилпентанон-3</div>
<div class="ul" style="left:552px;top:417px;width:594.5px"></div>
<div class="doc" style="left:326px;top:437px"><b>5</b>.</div>
<div class="doc" style="left:360px;top:437px;">2,3,4-триметилоктаналь</div>
<div class="ul" style="left:597px;top:461px;width:550.5px"></div>
<div class="doc" style="left:293px;top:481px;letter-spacing:-0.06px;">Задание 34: Запишите уравнения химических реакций:</div>
<div class="doc" style="left:326px;top:525px"><b>1</b>.</div>
<div class="doc" style="left:360px;top:525px;">Гидрирование <span class="sq">пропаналя</span></div>
<div class="ul" style="left:604px;top:549px;width:539px"></div>
<div class="doc" style="left:326px;top:569px"><b>2</b>.</div>
<div class="doc" style="left:360px;top:569px;">Гидрирование бутанона-2</div>
<div class="ul" style="left:616px;top:593px;width:528px"></div>
<div class="doc" style="left:326px;top:613px"><b>3</b>.</div>
<div class="doc" style="left:360px;top:613px;">Реакцию серебряного зеркала 2-метилпентаналя</div>
<div class="ul" style="left:829px;top:637px;width:308.5px"></div>
<div class="doc" style="left:326px;top:657px"><b>4</b>.</div>
<div class="doc" style="left:360px;top:657px;">Реакцию окисления медного зеркала с формальдегидом</div>
<div class="ul" style="left:893px;top:681px;width:253.5px"></div>
<div class="a" style="left:1349px;top:147px;width:17px;height:560px;background:linear-gradient(90deg,#b5d0f5 0,#b5d0f5 1px,#8eadda 2px,#86a5d3 8px,#7f9ecd 100%)"></div>
<div class="a" style="left:1349px;top:655px;width:17px;height:52px;background:#a9c5ee"></div>
<div class="a" style="left:1353px;top:144px;width:9px;height:2px;background:#1e3a6e"></div>
<div class="a" style="left:1350px;top:148.500px;width:16px;height:15.500px;background:#c0c8d6;border:1px solid #9aa6bc"></div>
<svg class="i" style="left:1352px;top:151px" width="13" height="11" viewBox="0 0 13 11"><path d="M0.500,2.500h4v-2h7v6h-3v3h-4v-2h-4z" fill="#f4f6fa" stroke="#333" stroke-width=".9"/><circle cx="5.500" cy="5" r="1.200" fill="none" stroke="#333" stroke-width=".7"/><circle cx="8.500" cy="6" r="1.200" fill="none" stroke="#333" stroke-width=".7"/></svg>
<svg class="i" style="left:1353.5px;top:171.5px" width="8" height="4" viewBox="0 0 8 4"><path d="M0,4h8l-4,-4z" fill="#4a6a9c"/></svg>
<div class="a" style="left:1350.500px;top:497.500px;width:14px;height:7px;border:1px solid #3d4d6c;border-radius:1.500px;background:linear-gradient(90deg,#f4f7fc,#d9e0ec 60%,#eef2f9)"></div>
<svg class="i" style="left:1353.5px;top:643px" width="8" height="6" viewBox="0 0 8 6"><path d="M0,0h8l-4,6z" fill="#4a6a9c"/></svg>
<svg class="i" style="left:1353.8px;top:659.8px" width="6" height="7" viewBox="0 0 6 7"><path d="M0.300,3.300l2.700,-3.300l2.700,3.300zM0.300,6.600l2.700,-3.300l2.700,3.300z" fill="#000"/></svg>
<svg class="i" style="left:1353.5px;top:675.5px" width="8" height="8" viewBox="0 0 8 8"><defs><radialGradient id="bc" cx=".4" cy=".35" r=".7"><stop offset="0" stop-color="#fff"/><stop offset="1" stop-color="#9aa3b3"/></radialGradient></defs><circle cx="4" cy="4" r="3.300" fill="url(#bc)" stroke="#000" stroke-width="1"/></svg>
<svg class="i" style="left:1353.8px;top:693.6px" width="6" height="7" viewBox="0 0 6 7"><path d="M0.300,0l2.700,3.300l2.700,-3.300zM0.300,3.300l2.700,3.300l2.700,-3.300z" fill="#000"/></svg>
<div id="status" class="a"></div>
<span class="tx" style="left:8.80px;top:709.82px;font:normal normal 11.5px/14px 'Liberation Sans','DejaVu Sans',sans-serif;color:#1a3a72;letter-spacing:-0.234px;">Страница: 22 из 31</span>
<span class="tx" style="left:126.00px;top:709.82px;font:normal normal 11.5px/14px 'Liberation Sans','DejaVu Sans',sans-serif;color:#1a3a72;letter-spacing:-0.346px;">Число слов: 3 625</span>
<span class="tx" style="left:268.00px;top:709.82px;font:normal normal 11.5px/14px 'Liberation Sans','DejaVu Sans',sans-serif;color:#1a3a72;letter-spacing:-0.349px;">Русский (Россия)</span>
<div class="a" style="left:116px;top:709px;width:2px;height:18px;background:linear-gradient(90deg,#8fb0dd 0,#8fb0dd 1px,#eef5fd 1px)"></div>
<div class="a" style="left:226px;top:709px;width:2px;height:18px;background:linear-gradient(90deg,#8fb0dd 0,#8fb0dd 1px,#eef5fd 1px)"></div>
<div class="a" style="left:375px;top:709px;width:2px;height:18px;background:linear-gradient(90deg,#8fb0dd 0,#8fb0dd 1px,#eef5fd 1px)"></div>
<svg class="i" style="left:235px;top:709px" width="17" height="16" viewBox="0 0 17 16"><path d="M0.800,10 L7,6.500 L9,12.800 L3.500,15Z" fill="#fdfdfe" stroke="#5f6f94" stroke-width=".9"/><path d="M7,6.500 L14.500,8.500 L15.500,11 L9,12.800Z" fill="#eef1f7" stroke="#5f6f94" stroke-width=".9"/><path d="M3.500,15.300 L9,13.200 L15.500,11.500" fill="none" stroke="#3f4f78" stroke-width="1.300"/><path d="M7.500,1.200 L15,9.500 M15,1.500 L8,8.800" stroke="#e0523f" stroke-width="2.100" stroke-linecap="round"/></svg>
<div class="a" style="left:1090.500px;top:708.500px;width:92px;height:18px;border:1px solid #9db9e0;border-radius:2px;background:linear-gradient(#dbe8f9,#c3d8f5 50%,#b3cdf1 50%,#c9dcf6)"></div>
<div class="a" style="left:1090.500px;top:708.500px;width:19px;height:18px;border:1px solid #c29b5a;border-radius:2px 0 0 2px;background:linear-gradient(#fdd9a0 0,#fbc66e 45%,#f9b144 50%,#fcd68b 100%)"></div>
<div class="a" style="left:1127.5px;top:709.500px;width:1px;height:16px;background:#a5bfe3"></div>
<div class="a" style="left:1145.5px;top:709.500px;width:1px;height:16px;background:#a5bfe3"></div>
<div class="a" style="left:1163.5px;top:709.500px;width:1px;height:16px;background:#a5bfe3"></div>
<svg class="i" style="left:1094px;top:711px" width="12" height="13" viewBox="0 0 12 13"><rect x="0.500" y="0.500" width="11" height="12" fill="#fff" stroke="#555" stroke-width="1"/><path d="M2.500,3.500h7M2.500,5.500h7M2.500,7.500h7M2.500,9.500h7" stroke="#555" stroke-width="1"/></svg>
<svg class="i" style="left:1112px;top:711px" width="13" height="13" viewBox="0 0 13 13"><path d="M0.500,1.500h5l1,1l1,-1h5v10h-5l-1,1l-1,-1h-5z" fill="#fff" stroke="#555" stroke-width="1"/><path d="M6.500,2.500v9M2,4.500h3M2,6.500h3M2,8.500h3M8,4.500h3M8,6.500h3M8,8.500h3" stroke="#555" stroke-width=".9"/></svg>
<svg class="i" style="left:1130px;top:711px" width="14" height="14" viewBox="0 0 14 14"><rect x="0.500" y="0.500" width="10" height="9" fill="#fff" stroke="#555" stroke-width="1"/><path d="M2,3.500h7M2,5.500h7" stroke="#555" stroke-width="1"/><circle cx="10" cy="10" r="3.500" fill="#3d9a57" stroke="#2d6e8a" stroke-width=".8"/></svg>
<svg class="i" style="left:1148.5px;top:712px" width="13" height="12" viewBox="0 0 13 12"><path d="M1,1.500h7M4,4.500h8M4,7.500h8M6,10.500h6" stroke="#555" stroke-width="1.100"/></svg>
<svg class="i" style="left:1166.5px;top:712px" width="13" height="12" viewBox="0 0 13 12"><path d="M0,1.500h13M0,4.500h13M0,7.500h13M0,10.500h13" stroke="#555" stroke-width="1.100"/></svg>
<span class="tx" style="left:1192.00px;top:709.82px;font:normal normal 11.5px/14px 'Liberation Sans','DejaVu Sans',sans-serif;color:#1a3a72;letter-spacing:-1.138px;">139%</span>
<svg class="i" style="left:1227px;top:709px" width="16" height="16" viewBox="0 0 16 16"><defs><linearGradient id="zb" x1="0" y1="0" x2="0" y2="1"><stop offset="0" stop-color="#fdfeff"/><stop offset=".5" stop-color="#dfe7f3"/><stop offset="1" stop-color="#f4f8fd"/></linearGradient></defs><circle cx="8" cy="8" r="7.200" fill="url(#zb)" stroke="#6d7f9d" stroke-width="1"/><path d="M4,8h8" stroke="#3b4a66" stroke-width="1.800"/></svg>
<svg class="i" style="left:1345px;top:709px" width="16" height="16" viewBox="0 0 16 16"><defs><linearGradient id="zb" x1="0" y1="0" x2="0" y2="1"><stop offset="0" stop-color="#fdfeff"/><stop offset=".5" stop-color="#dfe7f3"/><stop offset="1" stop-color="#f4f8fd"/></linearGradient></defs><circle cx="8" cy="8" r="7.200" fill="url(#zb)" stroke="#6d7f9d" stroke-width="1"/><path d="M4,8h8" stroke="#3b4a66" stroke-width="1.800"/><path d="M8,4v8" stroke="#3b4a66" stroke-width="1.800"/></svg>
<div class="a" style="left:1244px;top:716px;width:100px;height:2px;background:linear-gradient(#7f9cc8 0,#7f9cc8 1px,#e6effb 1px)"></div>
<svg class="i" style="left:1292.5px;top:710px" width="10" height="13" viewBox="0 0 10 13"><path d="M0.500,0.500h8v8l-4,4l-4,-4z" fill="#e9f0fa" stroke="#5d7399" stroke-width="1"/><path d="M4.500,3v5" stroke="#8a9bb8" stroke-width="1"/></svg>
<div id="taskbar" class="a"></div>
<div class="a" style="left:48px;top:729px;width:344px;height:39px;background:#f2f2f2"></div>
<svg class="i" style="left:16px;top:740px" width="16" height="16" viewBox="0 0 16 16"><path d="M0,2.200l6.500,-0.900v6.300h-6.500zM7.500,1.200l8.500,-1.200v7.600h-8.500zM0,8.600h6.500v6.300l-6.500,-0.900zM7.500,8.600h8.500v7.600l-8.500,-1.200z" fill="#fff"/></svg>
<svg class="i" style="left:59px;top:738px" width="18" height="19" viewBox="0 0 18 19"><circle cx="12.300" cy="6.700" r="4.700" fill="none" stroke="#222" stroke-width="1.300"/><path d="M9,10.200l-7.500,7" stroke="#222" stroke-width="1.400"/></svg>
<span class="tx" style="left:89.00px;top:739.56px;font:normal normal 14.7px/18px 'Liberation Sans','DejaVu Sans',sans-serif;color:#3a3a3a;letter-spacing:-0.080px;">Введите здесь текст для поиска</span>
<svg class="i" style="left:407px;top:739px" width="18" height="17" viewBox="0 0 18 17"><path d="M1.500,1v2.500h10v-2.500M1.500,16v-2.500h10v2.500" stroke="#fff" stroke-width="1.100" fill="none"/><rect x="1.500" y="5.700" width="10" height="5.800" fill="none" stroke="#fff" stroke-width="1.100"/><path d="M15.400,1v4.500M15.400,9.500v6.500" stroke="#fff" stroke-width="1.100"/><rect x="14.200" y="5.400" width="2.500" height="2.800" fill="#fff"/></svg>
<svg class="i" style="left:454.7px;top:736px" width="24" height="26" viewBox="0 0 24 26"><path d="M12,1c7,0 10.500,3.500 10.500,10c0,6.500 -3.500,10 -9.500,10h-2l-4.500,4.500v-5.500c-3.500,-1.500 -5,-4.500 -5,-9c0,-6.500 3.500,-10 10.500,-10z" fill="#7b62d8" stroke="#e4dcfa" stroke-width="1.800"/><path d="M8,7c0,5 3,8.500 8,9l1.500,-2l-2.500,-1.800l-1.300,1c-1.500,-0.700 -2.700,-2 -3.300,-3.600l1,-1.200l-1.600,-2.600z" fill="#fff"/><path d="M13,5.500c2.500,0.300 4,2 4.200,4.500M13,7.500c1.300,0.200 2,1 2.200,2.300" stroke="#fff" stroke-width=".9" fill="none"/></svg>
<svg class="i" style="left:503.5px;top:736px" width="23" height="23" viewBox="0 0 23 23"><circle cx="11.500" cy="11.500" r="11" fill="#f4f4f4"/><path d="M6,4.500l5.500,8v6.500M17,4.500l-5.500,8" stroke="#e0262b" stroke-width="2.300" fill="none" stroke-linecap="round"/></svg>
<svg class="i" style="left:553px;top:736.8px" width="23" height="21" viewBox="0 0 23 21"><path d="M0.500,2.500h8l2,2.500h12v14h-22z" fill="#f5c94a"/><path d="M0.500,7h22v12h-22z" fill="#fbd968"/><path d="M4,19v-7h15v7h-4v-3.500h-7v3.500z" fill="#3d8ad6"/></svg>
<svg class="i" style="left:601.5px;top:736px" width="23" height="23" viewBox="0 0 23 23"><circle cx="11.500" cy="11.500" r="10.500" fill="#10a5e3"/><circle cx="6" cy="6" r="5" fill="#10a5e3"/><circle cx="17" cy="17.500" r="5" fill="#10a5e3"/></svg>
<span class="tx" style="left:607.20px;top:738.05px;font:normal bold 17px/18px 'Liberation Sans','DejaVu Sans',sans-serif;color:#fff;letter-spacing:0.000px;">S</span>
<div class="a" style="left:639px;top:728px;width:48px;height:40px;background:#5d574f"></div>
<svg class="i" style="left:651px;top:736px" width="24" height="23" viewBox="0 0 24 23"><path d="M6,1h15v20h-15z" fill="#f3f6fb" stroke="#8fa3c6" stroke-width="1"/><path d="M12,5.500h7M12,8.500h7M12,11.500h7M12,14.500h7M9,17.500h10" stroke="#6b84b5" stroke-width="1.100"/><path d="M0.500,5l11,-1.500v16l-11,-1.500z" fill="#2a5db0" stroke="#1d3f80" stroke-width=".8"/></svg>
<span class="tx" style="left:653.50px;top:742.42px;font:normal bold 9.5px/10px 'Liberation Sans','DejaVu Sans',sans-serif;color:#fff;letter-spacing:0.000px;">W</span>
<div class="a" style="left:447px;top:766px;width:40px;height:2px;background:#7db7e8"></div>
<div class="a" style="left:495.5px;top:766px;width:40.0px;height:2px;background:#7db7e8"></div>
<div class="a" style="left:544.5px;top:766px;width:40.0px;height:2px;background:#7db7e8"></div>
<div class="a" style="left:593px;top:766px;width:40px;height:2px;background:#7db7e8"></div>
<div class="a" style="left:639px;top:766px;width:48px;height:2px;background:#7db7e8"></div>
<svg class="i" style="left:1089px;top:743px" width="12" height="8" viewBox="0 0 12 8"><path d="M0.700,7l5.300,-5.500l5.300,5.500" stroke="#fff" stroke-width="1.300" fill="none"/></svg>
<svg class="i" style="left:1111.5px;top:743.5px" width="17" height="10" viewBox="0 0 17 10"><rect x="0.600" y="0.600" width="13.500" height="8" fill="none" stroke="#fff" stroke-width="1.200"/><rect x="2.200" y="2.300" width="3" height="4.600" fill="#fff"/><rect x="14.500" y="3" width="1.600" height="3.200" fill="#fff"/></svg>
<svg class="i" style="left:1136px;top:741px" width="15" height="14" viewBox="0 0 15 14"><path d="M1.500,13a11.500,11.500 0 0 1 11.500,-11.500M4.500,13a8.500,8.500 0 0 1 8.500,-8.500M7.500,13a5.500,5.500 0 0 1 5.500,-5.500" stroke="#cfcfc8" stroke-width="1.200" fill="none"/><circle cx="12" cy="12" r="1.600" fill="#fff"/></svg>
<svg class="i" style="left:1158.5px;top:740.5px" width="18" height="15" viewBox="0 0 18 15"><path d="M0.600,5h3l4,-3.500v12l-4,-3.500h-3z" fill="none" stroke="#fff" stroke-width="1.100"/><path d="M10,5a3.500,3.500 0 0 1 0,5M12,3a6.500,6.500 0 0 1 0,9M14,1a9.500,9.500 0 0 1 0,13" stroke="#fff" stroke-width="1.100" fill="none"/></svg>
<svg class="i" style="left:1186px;top:739px" width="19" height="18" viewBox="0 0 19 18"><path d="M11.500,1.500c1.500,-1 3.500,0.500 3,2.500l-5,9l-3,1l0.500,-3.500z" fill="none" stroke="#fff" stroke-width="1.100"/><path d="M7,10.500c-3,-1 -5.500,1 -5.500,3.500c0,2 2,3 3.500,2c2,-1.300 2,-4 3.500,-5.500c2.500,-2.500 6,-2 9,-0.500" stroke="#fff" stroke-width="1.100" fill="none"/></svg>
<span class="tx" style="left:1218.30px;top:740.60px;font:normal normal 12px/14px 'Liberation Sans','DejaVu Sans',sans-serif;color:#fff;letter-spacing:-1.165px;">РУС</span>
<span class="tx" style="left:1266.90px;top:731.75px;font:normal normal 11px/14px 'Liberation Sans','DejaVu Sans',sans-serif;color:#fff;letter-spacing:-0.432px;">10:37</span>
<span class="tx" style="left:1254.60px;top:749.15px;font:normal normal 11px/14px 'Liberation Sans','DejaVu Sans',sans-serif;color:#fff;letter-spacing:-0.328px;">14.04.2020</span>
<svg class="i" style="left:1324.5px;top:739.5px" width="18" height="14" viewBox="0 0 18 14"><path d="M0.500,0.500h16v10h-9l-3.500,3v-3h-3.500z" fill="#fff"/><path d="M3,3.500h11M3,5.500h11M3,7.500h7" stroke="#323828" stroke-width="1.200"/></svg>
<svg class="i" style="left:1332.5px;top:747.5px" width="16" height="16" viewBox="0 0 16 16"><circle cx="8" cy="8" r="7.300" fill="#3a3d33" stroke="#9a9a92" stroke-width="1.200"/></svg>
<span class="tx" style="left:1337.60px;top:749.55px;font:normal bold 11px/12px 'Liberation Sans','DejaVu Sans',sans-serif;color:#fff;letter-spacing:0.000px;">1</span>
<div class="a" style="left:1361px;top:729px;width:1px;height:39px;background:#8a8d86"></div>
<svg class="i" style="left:426px;top:284.5px" width="158" height="3" viewBox="0 0 158 3"><path d="M0,2.5L2,0.5L4,2.5L6,0.5L8,2.5L10,0.5L12,2.5L14,0.5L16,2.5L18,0.5L20,2.5L22,0.5L24,2.5L26,0.5L28,2.5L30,0.5L32,2.5L34,0.5L36,2.5L38,0.5L40,2.5L42,0.5L44,2.5L46,0.5L48,2.5L50,0.5L52,2.5L54,0.5L56,2.5L58,0.5L60,2.5L62,0.5L64,2.5L66,0.5L68,2.5L70,0.5L72,2.5L74,0.5L76,2.5L78,0.5L80,2.5L82,0.5L84,2.5L86,0.5L88,2.5L90,0.5L92,2.5L94,0.5L96,2.5L98,0.5L100,2.5L102,0.5L104,2.5L106,0.5L108,2.5L110,0.5L112,2.5L114,0.5L116,2.5L118,0.5L120,2.5L122,0.5L124,2.5L126,0.5L128,2.5L130,0.5L132,2.5L134,0.5L136,2.5L138,0.5L140,2.5L142,0.5L144,2.5L146,0.5L148,2.5L150,0.5L152,2.5L154,0.5L156,2.5" fill="none" stroke="#c23a2e" stroke-width=".9"/></svg>
<svg class="i" style="left:360px;top:327.5px" width="104" height="3" viewBox="0 0 104 3"><path d="M0,2.5L2,0.5L4,2.5L6,0.5L8,2.5L10,0.5L12,2.5L14,0.5L16,2.5L18,0.5L20,2.5L22,0.5L24,2.5L26,0.5L28,2.5L30,0.5L32,2.5L34,0.5L36,2.5L38,0.5L40,2.5L42,0.5L44,2.5L46,0.5L48,2.5L50,0.5L52,2.5L54,0.5L56,2.5L58,0.5L60,2.5L62,0.5L64,2.5L66,0.5L68,2.5L70,0.5L72,2.5L74,0.5L76,2.5L78,0.5L80,2.5L82,0.5L84,2.5L86,0.5L88,2.5L90,0.5L92,2.5L94,0.5L96,2.5L98,0.5L100,2.5L102,0.5" fill="none" stroke="#c23a2e" stroke-width=".9"/></svg>
<svg class="i" style="left:499px;top:547.5px" width="102" height="3" viewBox="0 0 102 3"><path d="M0,2.5L2,0.5L4,2.5L6,0.5L8,2.5L10,0.5L12,2.5L14,0.5L16,2.5L18,0.5L20,2.5L22,0.5L24,2.5L26,0.5L28,2.5L30,0.5L32,2.5L34,0.5L36,2.5L38,0.5L40,2.5L42,0.5L44,2.5L46,0.5L48,2.5L50,0.5L52,2.5L54,0.5L56,2.5L58,0.5L60,2.5L62,0.5L64,2.5L66,0.5L68,2.5L70,0.5L72,2.5L74,0.5L76,2.5L78,0.5L80,2.5L82,0.5L84,2.5L86,0.5L88,2.5L90,0.5L92,2.5L94,0.5L96,2.5L98,0.5L100,2.5" fill="none" stroke="#c23a2e" stroke-width=".9"/></svg>
</body></html>
